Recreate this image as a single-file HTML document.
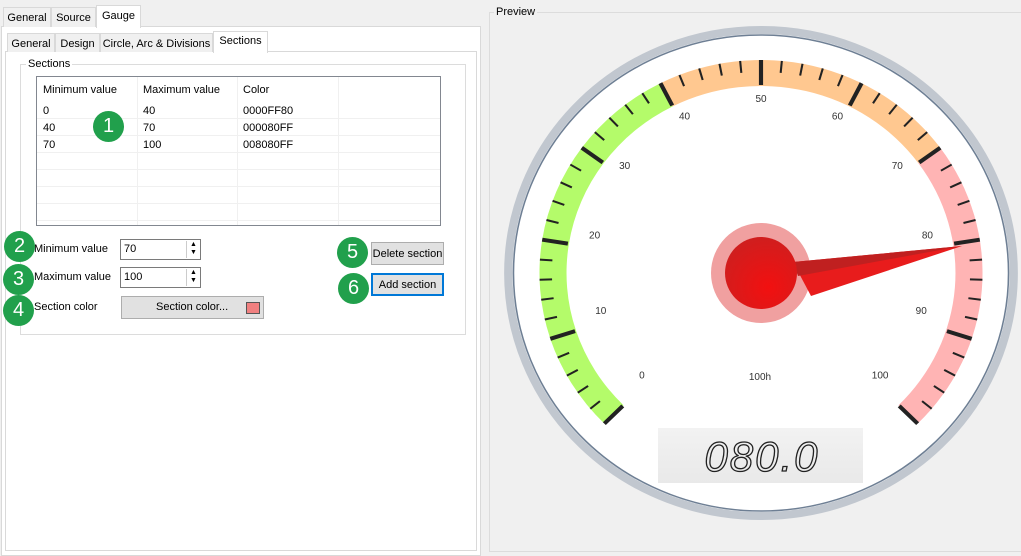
<!DOCTYPE html>
<html><head><meta charset="utf-8"><style>
body{margin:0;width:1021px;height:543px;background:#f0f0f0;font-family:"Liberation Sans",sans-serif;font-size:11px;color:#000;position:relative;overflow:hidden}
.a{position:absolute;box-sizing:border-box}
.tab{position:absolute;box-sizing:border-box;border:1px solid #d9d9d9;border-bottom:none;background:#f0f0f0;padding:4px 0 0 0;text-align:center;font-size:11px}
.sel{background:#fff;z-index:2}
.badge{position:absolute;width:31px;height:31px;border-radius:50%;background:#21a04c;color:#fff;font-size:20px;text-align:center;line-height:31px;z-index:3}
.cell{position:absolute;font-size:11px}
.hl{position:absolute;height:1px;background:#f0f0f0}
.vl{position:absolute;width:1px;background:#f0f0f0}
</style></head><body>
<div class="a" style="left:1px;top:26px;width:480px;height:530px;border:1px solid #d9d9d9;background:#fff"></div>
<div class="tab" style="left:3px;top:7px;width:48px;height:20px">General</div>
<div class="tab" style="left:51px;top:7px;width:45px;height:20px">Source</div>
<div class="tab sel" style="left:96px;top:5px;width:45px;height:23px;padding-top:4px">Gauge</div>
<div class="a" style="left:5px;top:51px;width:472px;height:500px;border:1px solid #d9d9d9;background:#fff"></div>
<div class="tab" style="left:7px;top:33px;width:48px;height:19px">General</div>
<div class="tab" style="left:55px;top:33px;width:45px;height:19px">Design</div>
<div class="tab" style="left:100px;top:33px;width:113px;height:19px">Circle, Arc &amp; Divisions</div>
<div class="tab sel" style="left:213px;top:31px;width:55px;height:22px;padding-top:3px">Sections</div>
<div class="a" style="left:20px;top:64px;width:446px;height:271px;border:1px solid #dcdcdc"></div>
<div class="a" style="left:26px;top:58px;background:#fff;padding:0 2px">Sections</div>
<div class="a" style="left:36px;top:76px;width:405px;height:150px;border:1px solid #828790;background:#fff;overflow:hidden">
 <div class="vl" style="left:100px;top:0;height:150px"></div>
 <div class="vl" style="left:200px;top:0;height:150px"></div>
 <div class="vl" style="left:301px;top:0;height:150px"></div>
 <div class="hl" style="left:0;top:41px;width:403px"></div>
 <div class="hl" style="left:0;top:58px;width:403px"></div>
 <div class="hl" style="left:0;top:75px;width:403px"></div>
 <div class="hl" style="left:0;top:92px;width:403px"></div>
 <div class="hl" style="left:0;top:109px;width:403px"></div>
 <div class="hl" style="left:0;top:126px;width:403px"></div>
 <div class="hl" style="left:0;top:143px;width:403px"></div>
 <div class="cell" style="left:6px;top:7px">Minimum value</div>
 <div class="cell" style="left:106px;top:7px">Maximum value</div>
 <div class="cell" style="left:206px;top:7px">Color</div>
 <div class="cell" style="left:6px;top:28px">0</div><div class="cell" style="left:106px;top:28px">40</div><div class="cell" style="left:206px;top:28px">0000FF80</div>
 <div class="cell" style="left:6px;top:45px">40</div><div class="cell" style="left:106px;top:45px">70</div><div class="cell" style="left:206px;top:45px">000080FF</div>
 <div class="cell" style="left:6px;top:62px">70</div><div class="cell" style="left:106px;top:62px">100</div><div class="cell" style="left:206px;top:62px">008080FF</div>
</div>
<div class="a" style="left:34px;top:243px">Minimum value</div>
<div class="a" style="left:34px;top:271px">Maximum value</div>
<div class="a" style="left:34px;top:301px">Section color</div>
<div class="a" style="left:120px;top:239px;width:81px;height:21px;border:1px solid #7a7a7a;background:#fff;padding:3px 3px">70
 <div class="a" style="left:65px;top:1px;width:14px;height:17px;border-left:1px solid #ccc;font-size:7px;line-height:8px;text-align:center">▲<br>▼</div></div>
<div class="a" style="left:120px;top:267px;width:81px;height:21px;border:1px solid #7a7a7a;background:#fff;padding:3px 3px">100
 <div class="a" style="left:65px;top:1px;width:14px;height:17px;border-left:1px solid #ccc;font-size:7px;line-height:8px;text-align:center">▲<br>▼</div></div>
<div class="a" style="left:121px;top:296px;width:143px;height:23px;border:1px solid #adadad;background:#e1e1e1;padding:4px 0 0 34px">Section color...
 <div class="a" style="left:124px;top:5px;width:14px;height:12px;border:1px solid #555;background:#f08080"></div></div>
<div class="a" style="left:371px;top:242px;width:73px;height:23px;border:1px solid #adadad;background:#e1e1e1;text-align:center;padding-top:5px">Delete section</div>
<div class="a" style="left:371px;top:273px;width:73px;height:23px;border:2px solid #0078d7;background:#e1e1e1;text-align:center;padding-top:4px">Add section</div>
<div class="badge" style="left:93px;top:111px">1</div>
<div class="badge" style="left:4px;top:231px">2</div>
<div class="badge" style="left:3px;top:264px">3</div>
<div class="badge" style="left:3px;top:295px">4</div>
<div class="badge" style="left:337px;top:237px">5</div>
<div class="badge" style="left:338px;top:273px">6</div>
<div class="a" style="left:489px;top:12px;width:540px;height:540px;border:1px solid #dcdcdc"></div>
<div class="a" style="left:494px;top:6px;background:#f0f0f0;padding:0 2px">Preview</div>
<svg class="a" style="left:0;top:0" width="1021" height="543" id="g">
 <defs>
  <radialGradient id="hub" cx="0.6" cy="0.7" r="0.7"><stop offset="0" stop-color="#f21010"/><stop offset="1" stop-color="#d01e1e"/></radialGradient>
  <linearGradient id="lcd" x1="0" y1="0" x2="0" y2="1"><stop offset="0" stop-color="#f2f2f2"/><stop offset="1" stop-color="#e9e9e9"/></linearGradient>
 </defs>
 <g transform="translate(761,273) scale(1.04,1)">
  <circle r="243" fill="#fff" stroke="#c1c7cf" stroke-width="8"/>
  <circle r="238" fill="none" stroke="#6e7f94" stroke-width="1.5"/>
  <g id="arcs"></g>
  <g id="ticks"></g>
 </g>
 <g id="labels" font-family="Liberation Sans,sans-serif" font-size="10" fill="#333" text-anchor="middle"></g>
 <text x="760" y="380" font-size="10" fill="#333" text-anchor="middle">100h</text>
 <circle cx="761" cy="273" r="50" fill="#f0a0a0"/>
 <polygon points="793,262 962,246 811,296" fill="#e81c1c"/>
 <polygon points="793,262 962,246 798,276" fill="#c02020"/>
 <circle cx="761" cy="273" r="36" fill="url(#hub)"/>
 <rect x="658" y="428" width="205" height="55" fill="url(#lcd)"/>
 <text x="762" y="471" font-size="42" fill="none" stroke="#222" stroke-width="1.3" text-anchor="middle" font-style="italic" letter-spacing="2">080.0</text>
</svg>
<script>
var ns="http://www.w3.org/2000/svg";
function el(p,t,a){var e=document.createElementNS(ns,t);for(var k in a)e.setAttribute(k,a[k]);document.getElementById(p).appendChild(e);return e}
function pt(v,r){var a=(-135+2.7*v)*Math.PI/180;return [r*Math.sin(a),-r*Math.cos(a)]}
function arc(v1,v2,c){var ro=213,ri=187,a=pt(v1,ro),b=pt(v2,ro),c1=pt(v2,ri),d=pt(v1,ri);var lg=(v2-v1)*2.7>180?1:0;
 el("arcs","path",{d:"M"+a+" A"+ro+","+ro+" 0 "+lg+" 1 "+b+" L"+c1+" A"+ri+","+ri+" 0 "+lg+" 0 "+d+"Z",fill:c})}
arc(0,40,"#b4fb6a");arc(40,70,"#ffc890");arc(70,100,"#ffb4b4");
for(var v=0;v<=100;v+=2){var maj=v%10==0;var a=pt(v,213),b=pt(v,maj?188:201);
 el("ticks","line",{x1:a[0],y1:a[1],x2:b[0],y2:b[1],stroke:"#222","stroke-width":maj?4:2})}
for(var v=0;v<=100;v+=10){var p=pt(v,162);el("labels","text",{x:761+p[0]*1.04,y:263+p[1]+1}).textContent=v}
</script>
</body></html>
